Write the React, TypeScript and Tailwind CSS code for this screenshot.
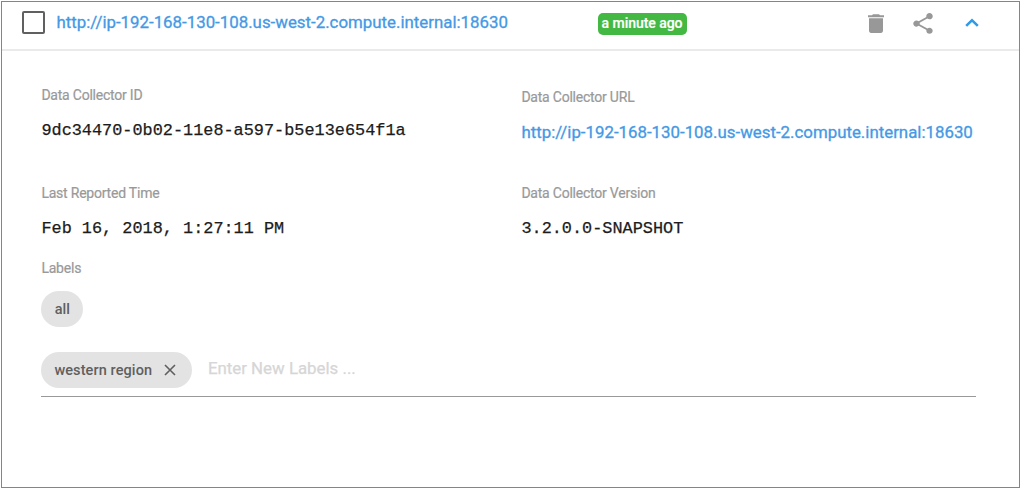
import React from "react";

const url = "http://ip-192-168-130-108.us-west-2.compute.internal:18630";

const caption = "text-[14px] tracking-[-0.22px] leading-[21px] text-[#999999] [-webkit-text-stroke:0.2px_#999999]";
const mono = "pt-px font-['Liberation_Mono',monospace] text-[16.87px] text-[#1c1c1c] [-webkit-text-stroke:0.25px_#1c1c1c]";
const link = "text-[16.85px] text-[#4499e5] [-webkit-text-stroke:0.3px_#4499e5]";

function Field({ label, children, className = "" }: { label: string; children: React.ReactNode; className?: string }) {
  return (
    <div className={`whitespace-nowrap ${className}`}>
      <div className={caption}>{label}</div>
      <div className="mt-[14px] flex h-5 leading-5">{children}</div>
    </div>
  );
}

export default function App() {
  return (
    <div className="h-[488px] w-[1020px] bg-white pt-px pl-px font-['Roboto',sans-serif]">
      <div className="h-[487px] w-[1019px] border border-[#858585]">
        <header className="flex h-[49px] items-center border-b-2 border-[#eaeaea] pb-[5px] pl-5">
          <div className="-mt-px h-[23px] w-[23px] shrink-0 rounded-[2px] border-2 border-[#606060]" />
          <div className={`-mt-[2px] ml-[11.5px] w-[541px] shrink-0 leading-5 whitespace-nowrap ${link}`}>{url}</div>
          <div className="mt-px flex h-[22px] w-[89px] shrink-0 items-center justify-center rounded-[5px] bg-[#43b944] pb-px text-[14px] font-medium tracking-[-0.05px] whitespace-nowrap text-white [-webkit-text-stroke:0.2px_#ffffff]">
            a minute ago
          </div>
          <svg className="mt-px ml-[177px] shrink-0" width="24" height="25" viewBox="0 0 24 24" preserveAspectRatio="none" fill="#989898">
            <path d="M5 19c0 1.1.9 2 2 2h10c1.1 0 2-.9 2-2V7H5v12zM20 4h-4l-1-1H9L8 4H4v2h16V4z" />
          </svg>
          <svg className="mt-px ml-[22px] shrink-0" width="26" height="25" viewBox="0 0 24 24" preserveAspectRatio="none" fill="#989898">
            <path d="M18 16.08c-.76 0-1.44.3-1.96.77L8.91 12.7c.05-.23.09-.46.09-.7s-.04-.47-.09-.7l7.05-4.11c.54.5 1.25.81 2.04.81 1.66 0 3-1.34 3-3s-1.34-3-3-3-3 1.34-3 3c0 .24.04.47.09.7L8.04 9.81C7.5 9.31 6.79 9 6 9c-1.66 0-3 1.34-3 3s1.34 3 3 3c.79 0 1.5-.31 2.04-.81l7.12 4.16c-.05.21-.08.43-.08.65 0 1.61 1.31 2.92 2.92 2.92 1.61 0 2.92-1.31 2.92-2.92s-1.31-2.92-2.92-2.92z" />
          </svg>
          <svg className="-mt-px ml-6 shrink-0" width="24" height="24" viewBox="0 0 24 24" fill="#2f9ae8">
            <path d="M12 7.5l-6.7 6.5 1.8 1.8 4.9-4.8 4.9 4.8 1.8-1.8z" />
          </svg>
        </header>
        <main className="pt-[34px] pl-[39.4px]">
          <div className="grid h-[98px] grid-cols-[480px_460px]">
            <Field label="Data Collector ID"><span className={mono}>9dc34470-0b02-11e8-a597-b5e13e654f1a</span></Field>
            <Field label="Data Collector URL" className="pt-[2px]"><span className={link}>{url}</span></Field>
          </div>
          <div className="grid h-[75px] grid-cols-[480px_460px]">
            <Field label="Last Reported Time"><span className={mono}>Feb 16, 2018, 1:27:11 PM</span></Field>
            <Field label="Data Collector Version"><span className={mono}>3.2.0.0-SNAPSHOT</span></Field>
          </div>
          <div className={caption}>Labels</div>
          <div className="mt-3 flex h-9 w-[42px] items-center justify-center rounded-full bg-[#e3e3e3] pt-px text-[14.5px] font-medium text-[#5f5f5f]">all</div>
          <div className="mt-[25px] flex h-[45px] w-[935px] items-start border-b border-[#999999]">
            <div className="flex h-9 w-[151px] items-center rounded-full bg-[#e3e3e3] pl-[13px] text-[14.5px] font-medium whitespace-nowrap text-[#5f5f5f]">
              <span className="w-[110px] pt-[2px] tracking-[0.1px]">western region</span>
              <svg width="12" height="12" viewBox="0 0 12 12" stroke="#5f5f5f" strokeWidth="1.6" fill="none">
                <path d="M1 1l10 10M11 1L1 11" />
              </svg>
            </div>
            <div className="ml-[15.5px] text-[16.85px] leading-8 whitespace-nowrap text-[#d6d6d6] [-webkit-text-stroke:0.25px_#d6d6d6]">Enter New Labels ...</div>
          </div>
        </main>
      </div>
    </div>
  );
}
